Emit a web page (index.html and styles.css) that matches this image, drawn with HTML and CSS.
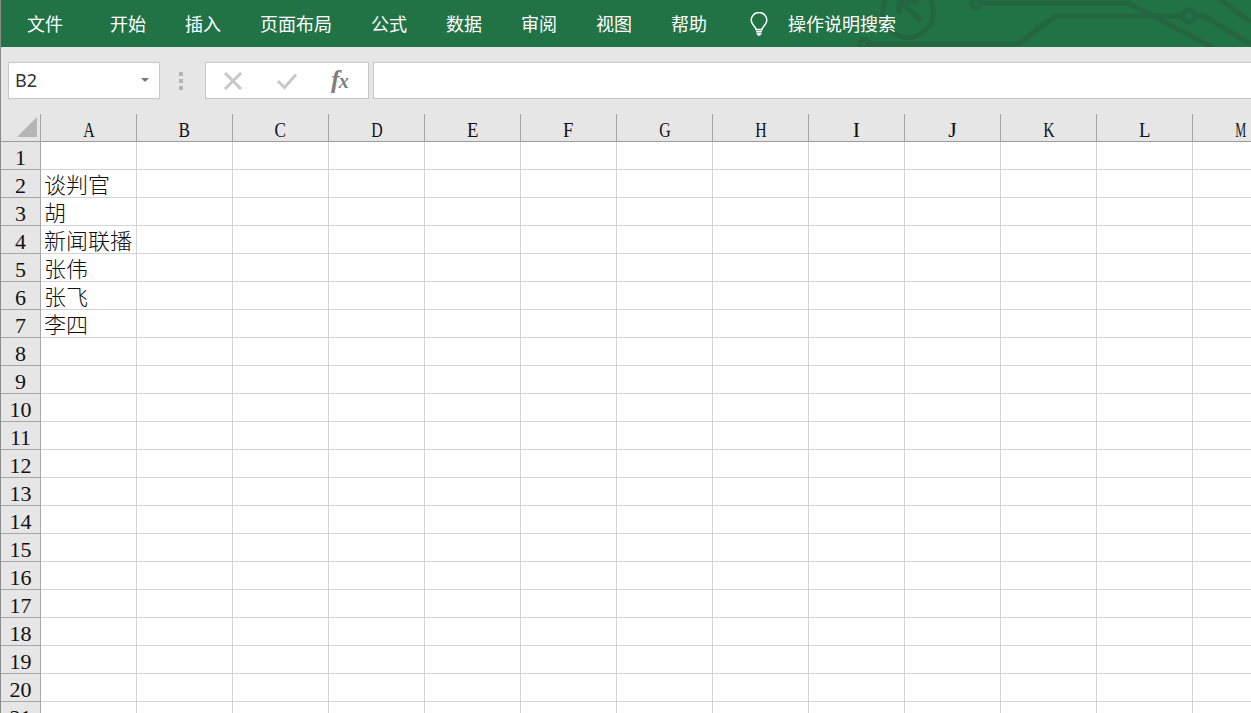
FILE: index.html
```html
<!DOCTYPE html>
<html lang="zh-CN">
<head>
<meta charset="utf-8">
<title>Excel</title>
<link rel="stylesheet" href="styles.css">
</head>
<body>
<div class="app">
  <header class="ribbon">
    <svg class="circuit" width="1251" height="47" viewBox="0 0 1251 47" fill="none" aria-hidden="true">
      <circle cx="908" cy="12" r="25.5"/>
      <path d="M921 21 899 0M899 2V14M897 2H919"/>
      <circle cx="976" cy="3" r="4.5"/>
      <path d="M981 3H1128L1212 47"/>
      <circle cx="864" cy="44" r="4.5"/>
      <path d="M869 44H1018L1055 16H1183M1195 16H1204L1243 40 1251 44"/>
      <circle cx="1189" cy="16" r="6"/>
      <path d="M1220 0 1251 22"/>
    </svg>
    <nav class="tabs">
      <span class="tab tab-file">文件</span>
      <span class="tab">开始</span>
      <span class="tab">插入</span>
      <span class="tab">页面布局</span>
      <span class="tab">公式</span>
      <span class="tab">数据</span>
      <span class="tab">审阅</span>
      <span class="tab">视图</span>
      <span class="tab">帮助</span>
    </nav>
    <div class="tell">
      <svg class="bulb" width="18" height="24" viewBox="0 0 18 24" fill="none" aria-hidden="true">
        <path d="M6 17.5C6 14.5 1.2 13 1.2 8.3A7.8 7.8 0 0 1 16.8 8.3C16.8 13 12 14.5 12 17.5Z"/>
        <path d="M6 19.5H12M6.5 21.5H11.5M7.5 23H10.5"/>
      </svg>
      <span>操作说明搜索</span>
    </div>
  </header>

  <section class="formula">
    <div class="namebox">
      <span>B2</span>
      <i class="caret"></i>
    </div>
    <div class="grip"><i></i><i></i><i></i></div>
    <div class="actions">
      <svg class="act" width="20" height="18" viewBox="0 0 20 18" fill="none" aria-hidden="true"><path d="M2 1 18 17M18 1 2 17"/></svg>
      <svg class="act" width="22" height="18" viewBox="0 0 22 18" fill="none" aria-hidden="true"><path d="M2 9 8.5 15.5 20 2.5"/></svg>
      <span class="fx"><b>f</b><em>x</em></span>
    </div>
    <div class="input"></div>
  </section>

  <table class="sheet">
    <colgroup>
      <col class="col-head">
      <col class="col-cell"><col class="col-cell"><col class="col-cell"><col class="col-cell"><col class="col-cell"><col class="col-cell"><col class="col-cell"><col class="col-cell"><col class="col-cell"><col class="col-cell"><col class="col-cell"><col class="col-cell"><col class="col-cell">
    </colgroup>
    <thead>
      <tr>
        <th class="corner"><i></i></th>
        <th><span class="s72">A</span></th><th><span class="s78">B</span></th><th><span class="s78">C</span></th><th><span class="s72">D</span></th><th><span class="s85">E</span></th><th><span class="s85">F</span></th><th><span class="s72">G</span></th><th><span class="s72">H</span></th><th><span>I</span></th><th><span>J</span></th><th><span class="s72">K</span></th><th><span class="s85">L</span></th><th><span class="s56">M</span></th>
      </tr>
    </thead>
    <tbody>
      <tr><th>1</th><td></td><td></td><td></td><td></td><td></td><td></td><td></td><td></td><td></td><td></td><td></td><td></td><td></td></tr>
      <tr><th>2</th><td>谈判官</td><td></td><td></td><td></td><td></td><td></td><td></td><td></td><td></td><td></td><td></td><td></td><td></td></tr>
      <tr><th>3</th><td>胡</td><td></td><td></td><td></td><td></td><td></td><td></td><td></td><td></td><td></td><td></td><td></td><td></td></tr>
      <tr><th>4</th><td>新闻联播</td><td></td><td></td><td></td><td></td><td></td><td></td><td></td><td></td><td></td><td></td><td></td><td></td></tr>
      <tr><th>5</th><td>张伟</td><td></td><td></td><td></td><td></td><td></td><td></td><td></td><td></td><td></td><td></td><td></td><td></td></tr>
      <tr><th>6</th><td>张飞</td><td></td><td></td><td></td><td></td><td></td><td></td><td></td><td></td><td></td><td></td><td></td><td></td></tr>
      <tr><th>7</th><td>李四</td><td></td><td></td><td></td><td></td><td></td><td></td><td></td><td></td><td></td><td></td><td></td><td></td></tr>
      <tr><th>8</th><td></td><td></td><td></td><td></td><td></td><td></td><td></td><td></td><td></td><td></td><td></td><td></td><td></td></tr>
      <tr><th>9</th><td></td><td></td><td></td><td></td><td></td><td></td><td></td><td></td><td></td><td></td><td></td><td></td><td></td></tr>
      <tr><th>10</th><td></td><td></td><td></td><td></td><td></td><td></td><td></td><td></td><td></td><td></td><td></td><td></td><td></td></tr>
      <tr><th>11</th><td></td><td></td><td></td><td></td><td></td><td></td><td></td><td></td><td></td><td></td><td></td><td></td><td></td></tr>
      <tr><th>12</th><td></td><td></td><td></td><td></td><td></td><td></td><td></td><td></td><td></td><td></td><td></td><td></td><td></td></tr>
      <tr><th>13</th><td></td><td></td><td></td><td></td><td></td><td></td><td></td><td></td><td></td><td></td><td></td><td></td><td></td></tr>
      <tr><th>14</th><td></td><td></td><td></td><td></td><td></td><td></td><td></td><td></td><td></td><td></td><td></td><td></td><td></td></tr>
      <tr><th>15</th><td></td><td></td><td></td><td></td><td></td><td></td><td></td><td></td><td></td><td></td><td></td><td></td><td></td></tr>
      <tr><th>16</th><td></td><td></td><td></td><td></td><td></td><td></td><td></td><td></td><td></td><td></td><td></td><td></td><td></td></tr>
      <tr><th>17</th><td></td><td></td><td></td><td></td><td></td><td></td><td></td><td></td><td></td><td></td><td></td><td></td><td></td></tr>
      <tr><th>18</th><td></td><td></td><td></td><td></td><td></td><td></td><td></td><td></td><td></td><td></td><td></td><td></td><td></td></tr>
      <tr><th>19</th><td></td><td></td><td></td><td></td><td></td><td></td><td></td><td></td><td></td><td></td><td></td><td></td><td></td></tr>
      <tr><th>20</th><td></td><td></td><td></td><td></td><td></td><td></td><td></td><td></td><td></td><td></td><td></td><td></td><td></td></tr>
      <tr><th>21</th><td></td><td></td><td></td><td></td><td></td><td></td><td></td><td></td><td></td><td></td><td></td><td></td><td></td></tr>
    </tbody>
  </table>
</div>
</body>
</html>
```
FILE: styles.css
```css
* { box-sizing: border-box; }

html, body {
  margin: 0;
  height: 100%;
  overflow: hidden;
  background: #fff;
}

.app {
  height: 713px;
  border-left: 1px solid #8c8c8c;
  overflow: hidden;
  font-family: "Noto Sans CJK SC", "Noto Sans", sans-serif;
}

/* ribbon */
.ribbon {
  position: relative;
  display: flex;
  align-items: center;
  height: 47px;
  padding: 0 0 2px 26px;
  background: #217346;
  color: #fff;
  font-size: 18px;
  font-weight: 400;
  overflow: hidden;
}

.circuit {
  position: absolute;
  left: -1px;
  top: 0;
}

.circuit path,
.circuit circle {
  stroke: #24663f;
  stroke-width: 5;
}

.tabs {
  position: relative;
  display: flex;
  gap: 39px;
}

.tab { white-space: nowrap; line-height: 24px; }
.tab-file { margin-right: 8px; }

.tell {
  position: relative;
  display: flex;
  align-items: center;
  gap: 20px;
  margin-left: 43px;
  line-height: 24px;
}

.bulb {
  margin-top: 2px;
}

.bulb path {
  stroke: #fff;
  stroke-width: 1.6;
}

/* formula bar */
.formula {
  display: flex;
  height: 67px;
  padding: 15px 0 0 7px;
  background: #e6e6e6;
}

.namebox,
.actions,
.input {
  height: 37px;
  background: #fff;
  border: 1px solid #c6c6c6;
}

.namebox {
  position: relative;
  width: 152px;
  padding-left: 6px;
  font-family: "Noto Sans", sans-serif;
  font-size: 18px;
  line-height: 35px;
  color: #333;
}

.caret {
  position: absolute;
  right: 10px;
  top: 15px;
  border: 4px solid transparent;
  border-top-color: #777;
  border-bottom: 0;
}

.grip {
  display: flex;
  flex-direction: column;
  gap: 3px;
  width: 45px;
  padding: 10px 0 0 19px;
}

.grip i {
  width: 4px;
  height: 4px;
  background: #b4b4b4;
}

.actions {
  display: flex;
  align-items: center;
  width: 164px;
  padding-left: 17px;
  flex: none;
}

.act path {
  stroke: #c8c8c8;
  stroke-width: 3;
}

.act + .act { margin-left: 33px; }

.fx {
  margin-left: 33px;
  font-family: "Liberation Serif", serif;
  font-style: italic;
  font-size: 26px;
  line-height: 24px;
  color: #7f7f7f;
}

.fx b { font-weight: 700; }
.fx em { font-size: 20px; font-weight: 700; margin-left: -1px; }

.input {
  flex: 1;
  margin-left: 4px;
  border-right: 0;
}

/* sheet */
.sheet {
  width: 1288px;
  table-layout: fixed;
  border-collapse: separate;
  border-spacing: 0;
  font-family: "Liberation Serif", "Noto Sans CJK SC", serif;
  font-size: 22px;
  color: #111;
}

.col-head { width: 40px; }
.col-cell { width: 96px; }

.sheet tr { height: 28px; }

.sheet th,
.sheet td {
  height: 28px;
  white-space: nowrap;
  font-weight: 400;
}

.sheet th {
  padding: 4px 0 0;
  line-height: 23px;
  background: #e6e6e6;
  text-align: center;
  border-right: 1px solid #a6a6a6;
  border-bottom: 1px solid #a6a6a6;
}

.sheet td {
  padding: 0 0 0 3px;
  line-height: 27px;
  font-family: "Noto Sans CJK SC", sans-serif;
  font-weight: 300;
  border-right: 1px solid #d4d4d4;
  border-bottom: 1px solid #d4d4d4;
}

.sheet thead th {
  border-bottom-color: #9c9c9c;
}

.sheet thead th span { display: inline-block; }

.s72 { transform: scaleX(.72); }
.s78 { transform: scaleX(.78); }
.s85 { transform: scaleX(.85); }
.s56 { transform: scaleX(.56); }

.corner { position: relative; }

.corner i {
  position: absolute;
  right: 3px;
  bottom: 4px;
  width: 0;
  height: 0;
  border-left: 20px solid transparent;
  border-bottom: 20px solid #b5b5b5;
}
```
